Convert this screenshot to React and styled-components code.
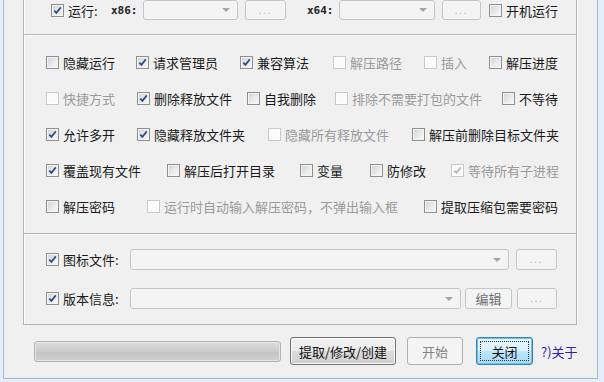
import React from "react";
import styled, { createGlobalStyle, css } from "styled-components";

const GlobalStyle = createGlobalStyle`
  html, body {
    margin: 0;
    padding: 0;
    background: #e6eef8;
  }
  body {
    width: 604px;
    height: 382px;
    overflow: hidden;
    font-family: "Noto Sans CJK SC", "Microsoft YaHei", sans-serif;
    font-size: 13px;
    color: #1a1a1a;
  }
`;

const Window = styled.div`
  margin-left: 3px;
  width: 593px;
  height: 378px;
  border: 1px solid #9fb9d6;
  border-top: none;
  background: #f0f0f0;
  display: flex;
  flex-direction: column;
`;

const Panel = styled.div`
  margin-left: 19px;
  width: 552px;
  border: 1px solid #b4b4b4;
  border-top: none;
  box-shadow: inset 1px 0 0 #fdfdfd, 1px 0 0 #fdfdfd;
  display: flex;
  flex-direction: column;
`;

const Section = styled.div`
  border-bottom: 1px solid #b4b4b4;
  & + & {
    border-top: 1px solid #fdfdfd;
  }
  &:last-child {
    border-bottom: none;
  }
`;

const TopSection = styled(Section)`
  height: 34px;
  padding-left: 27px;
`;

const OptionSection = styled(Section)`
  padding: 8px 0 9px 22px;
`;

const FileSection = styled(Section)`
  padding: 14px 0 15px 22px;
  display: flex;
  flex-direction: column;
  gap: 18px;
`;

const Row = styled.div`
  display: flex;
  align-items: center;
  height: ${(p) => p.$h || 36}px;
`;

const Item = styled.label`
  display: flex;
  align-items: center;
  flex: none;
  width: ${(p) => (p.$w ? `${p.$w}px` : "auto")};
  margin-left: ${(p) => p.$ml || 0}px;
  gap: 4px;
  white-space: nowrap;
  line-height: 1;
  color: ${(p) => (p.$disabled ? "#9a9a9a" : "#1a1a1a")};
`;

const Box = styled.span`
  width: 11px;
  height: 11px;
  flex: none;
  position: relative;
  border: 1px solid ${(p) => (p.$disabled ? "#c9c9c9" : "#8e8f8f")};
  background: ${(p) =>
    p.$disabled
      ? "#fbfbfb"
      : "linear-gradient(135deg, #d2d2d2 0%, #ececec 60%, #fafafa 100%)"};
  box-shadow: inset 0 0 0 1px ${(p) => (p.$disabled ? "#fff" : "#f4f4f4")};
  svg {
    position: absolute;
    left: 0;
    top: 0;
  }
`;

const Tag = styled.span`
  flex: none;
  width: ${(p) => p.$w}px;
  font-family: "DejaVu Sans Mono", monospace;
  font-weight: bold;
  font-size: 11px;
  color: #222;
`;

const Combo = styled.div`
  flex: none;
  width: ${(p) => p.$w}px;
  height: ${(p) => p.$h || 20}px;
  margin-left: ${(p) => p.$ml || 0}px;
  box-sizing: border-box;
  border: 1px solid #c6c6c6;
  border-radius: 3px;
  background: #f4f4f4;
  position: relative;
  &::after {
    content: "";
    position: absolute;
    right: 7px;
    top: 50%;
    margin-top: -2px;
    border-top: 4px solid #a4a4a4;
    border-left: 4px solid transparent;
    border-right: 4px solid transparent;
  }
`;

const SmallButton = styled.div`
  flex: none;
  width: ${(p) => p.$w}px;
  height: ${(p) => p.$h || 20}px;
  margin-left: ${(p) => p.$ml || 0}px;
  box-sizing: border-box;
  border: 1px solid #c6c6c6;
  border-radius: 3px;
  background: #f4f4f4;
  display: flex;
  align-items: center;
  justify-content: center;
  color: ${(p) => p.$color || "#b4b4b4"};
  font-size: ${(p) => p.$fs || 9}px;
  letter-spacing: ${(p) => p.$ls || 0}px;
  line-height: 1;
`;

const Footer = styled.div`
  margin-top: 12px;
  height: 28px;
  padding-left: 30px;
  display: flex;
  align-items: center;
`;

const Progress = styled.div`
  width: 247px;
  height: 21px;
  box-sizing: border-box;
  border: 1px solid #b2b2b2;
  border-radius: 3px;
  background: linear-gradient(#dcdcdc, #cbcbcb 50%, #c4c4c4 51%, #d0d0d0);
  box-shadow: inset 0 0 0 1px #e6e6e6;
`;

const Button = styled.div`
  flex: none;
  width: ${(p) => p.$w}px;
  height: 28px;
  margin-left: ${(p) => p.$ml}px;
  box-sizing: border-box;
  border-radius: 3px;
  display: flex;
  align-items: center;
  justify-content: center;
  line-height: 1;
  position: relative;
  ${(p) =>
    p.$variant === "disabled" &&
    css`
      border: 1px solid #adb2b5;
      background: #f4f4f4;
      color: #838383;
    `}
  ${(p) =>
    p.$variant === "normal" &&
    css`
      border: 1px solid #707070;
      background: linear-gradient(#f2f2f2, #ebebeb 50%, #dddddd 51%, #cfcfcf);
      box-shadow: inset 0 0 0 1px #fbfbfb;
      color: #111;
    `}
  ${(p) =>
    p.$variant === "focus" &&
    css`
      border: 1px solid #3c7fb1;
      background: linear-gradient(#eaf6fd, #d9f0fc 50%, #bee6fd 51%, #a7d9f5);
      box-shadow: inset 0 0 0 1px #6cc1ee;
      color: #111;
      &::before {
        content: "";
        position: absolute;
        inset: 3px;
        border: 1px dotted #333;
      }
    `}
`;

const About = styled.span`
  margin-left: 8px;
  color: #2424b4;
  line-height: 1;
`;

const Check = ({ checked, disabled }) => (
  <Box $disabled={disabled}>
    {checked && (
      <svg width="11" height="11" viewBox="0 0 11 11">
        <path
          d="M2.3 5.6 L4.4 7.9 L8.8 2.4"
          fill="none"
          stroke={disabled ? "#b8b8b8" : "#2d4d8f"}
          strokeWidth="1.7"
        />
      </svg>
    )}
  </Box>
);

const Option = ({ w, ml, checked, disabled, children }) => (
  <Item $w={w} $ml={ml} $disabled={disabled}>
    <Check checked={checked} disabled={disabled} />
    {children}
  </Item>
);

const rows = [
  [
    { w: 90, t: "隐藏运行" },
    { w: 104, t: "请求管理员", c: true },
    { w: 93, t: "兼容算法", c: true },
    { w: 91, t: "解压路径", d: true },
    { w: 65, t: "插入", d: true },
    { t: "解压进度" },
  ],
  [
    { w: 91, t: "快捷方式", d: true },
    { w: 110, t: "删除释放文件", c: true },
    { w: 88, t: "自我删除" },
    { w: 167, t: "排除不需要打包的文件", d: true },
    { t: "不等待" },
  ],
  [
    { w: 91, t: "允许多开", c: true },
    { w: 131, t: "隐藏释放文件夹", c: true },
    { w: 144, t: "隐藏所有释放文件", d: true },
    { t: "解压前删除目标文件夹" },
  ],
  [
    { w: 121, t: "覆盖现有文件", c: true },
    { w: 133, t: "解压后打开目录" },
    { w: 70, t: "变量" },
    { w: 81, t: "防修改" },
    { t: "等待所有子进程", c: true, d: true },
  ],
  [
    { w: 101, t: "解压密码" },
    { w: 277, t: "运行时自动输入解压密码，不弹出输入框", d: true },
    { t: "提取压缩包需要密码" },
  ],
];

export default function App() {
  return (
    <>
      <GlobalStyle />
      <Window>
        <Panel>
          <TopSection>
            <Row $h={20}>
              <Option w={60} checked>
                运行:
              </Option>
              <Tag $w={32}>x86:</Tag>
              <Combo $w={95} />
              <SmallButton $w={41} $ml={7} $ls={2}>...</SmallButton>
              <Tag $w={32} style={{ marginLeft: 21 }}>
                x64:
              </Tag>
              <Combo $w={96} />
              <SmallButton $w={39} $ml={7} $ls={2}>...</SmallButton>
              <Option ml={8}>开机运行</Option>
            </Row>
          </TopSection>
          <OptionSection>
            {rows.map((row, i) => (
              <Row key={i}>
                {row.map((o) => (
                  <Option key={o.t} w={o.w} checked={o.c} disabled={o.d}>
                    {o.t}
                  </Option>
                ))}
              </Row>
            ))}
          </OptionSection>
          <FileSection>
            <Row $h={21}>
              <Option w={84} checked>
                图标文件:
              </Option>
              <Combo $w={379} $h={21} />
              <SmallButton $w={41} $h={21} $ml={7} $ls={2}>...</SmallButton>
            </Row>
            <Row $h={21}>
              <Option w={84} checked>
                版本信息:
              </Option>
              <Combo $w={331} $h={21} />
              <SmallButton $w={47} $h={21} $ml={4} $fs={13} $color="#6f6f6f">
                编辑
              </SmallButton>
              <SmallButton $w={40} $h={21} $ml={5} $ls={2}>...</SmallButton>
            </Row>
          </FileSection>
        </Panel>
        <Footer>
          <Progress />
          <Button $w={106} $ml={9} $variant="normal">
            提取/修改/创建
          </Button>
          <Button $w={56} $ml={11} $variant="disabled">
            开始
          </Button>
          <Button $w={57} $ml={13} $variant="focus">
            关闭
          </Button>
          <About>?)关于</About>
        </Footer>
      </Window>
    </>
  );
}
